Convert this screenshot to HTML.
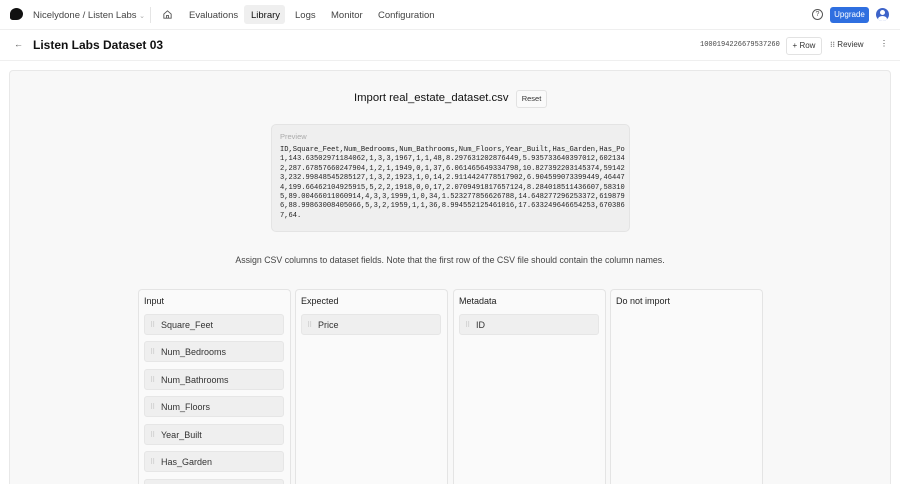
<!DOCTYPE html><html style="overflow:hidden;height:484px"><head><style>
body{margin:0;width:900px;height:484px;overflow:hidden;background:#fff;font-family:"Liberation Sans",sans-serif;color:#222;position:relative}
.a{position:absolute}
.nav{font-size:9.5px;color:#444}
.col{position:absolute;top:289px;width:151px;height:200px;border:1px solid #e4e4e4;border-bottom:none;border-radius:4px 4px 0 0;background:#fafafa}
.col h4{margin:0;font-weight:normal;font-size:9px;color:#222;position:absolute;left:5px;top:6px}
.it{position:absolute;left:5px;width:140px;height:21px;background:#efefef;border:1px solid #e6e6e6;border-radius:3px;font-size:9px;line-height:21px;box-sizing:border-box;padding-left:16px;color:#333}
.it:before{content:"⠿";position:absolute;left:5px;color:#bbb;font-size:7px}
pre{margin:0;font-family:"Liberation Mono",monospace;font-size:7.1px;line-height:9.4px;color:#222}
</style></head><body>
<div class="a" style="left:10px;top:8px;width:13px;height:12px;background:#111;border-radius:50% 50% 50% 20%"></div>
<div class="a nav" style="left:33px;top:10px">Nicelydone / Listen Labs <span style="color:#aaa;font-size:7px">⌄</span></div>
<div class="a" style="left:150px;top:7px;width:1px;height:16px;background:#e5e5e5"></div>
<svg class="a" style="left:162px;top:9px" width="11" height="11" viewBox="0 0 12 12"><path d="M2 5.5L6 2l4 3.5V10H2z M5 10V7h2v3" fill="none" stroke="#555" stroke-width="1"/></svg>
<div class="a nav" style="left:189px;top:10px">Evaluations</div>
<div class="a" style="left:244px;top:5px;width:41px;height:19px;background:#efefef;border-radius:3px"></div>
<div class="a nav" style="left:251px;top:10px;color:#111">Library</div>
<div class="a nav" style="left:295px;top:10px">Logs</div>
<div class="a nav" style="left:331px;top:10px">Monitor</div>
<div class="a nav" style="left:378px;top:10px">Configuration</div>
<div class="a" style="left:812px;top:9px;width:9px;height:9px;border:1px solid #555;border-radius:50%;font-size:7px;text-align:center;line-height:9px;color:#555">?</div>
<div class="a" style="left:830px;top:7px;width:39px;height:16px;background:#2f6fe0;border-radius:3px;color:#fff;font-size:8px;text-align:center;line-height:16px">Upgrade</div>
<div class="a" style="left:876px;top:8px;width:13px;height:13px;background:#3d63c9;border-radius:50%;overflow:hidden"><div style="position:absolute;left:4px;top:2px;width:5px;height:5px;background:#fff;border-radius:50%"></div><div style="position:absolute;left:2px;top:8px;width:9px;height:6px;background:#fff;border-radius:50%"></div></div>
<div class="a" style="left:0;top:29px;width:900px;height:1px;background:#efefef"></div>
<div class="a" style="left:14px;top:39px;font-size:9px;color:#555">←</div>
<div class="a" style="left:33px;top:38px;font-size:12px;font-weight:bold;color:#111">Listen Labs Dataset 03</div>
<div class="a" style="left:700px;top:41px;font-family:'Liberation Mono',monospace;font-size:7px;color:#444">1000194226679537260</div>
<div class="a" style="left:786px;top:37px;width:34px;height:16px;border:1px solid #e2e2e2;border-radius:3px;font-size:8px;line-height:16px;text-align:center;color:#333">+ Row</div>
<div class="a" style="left:830px;top:40px;font-size:8px;color:#333">⁝⁝ Review</div>
<div class="a" style="left:880px;top:39px;font-size:8px;color:#333">⋮</div>
<div class="a" style="left:0;top:60px;width:900px;height:1px;background:#efefef"></div>
<div class="a" style="left:9px;top:70px;width:880px;height:420px;background:#f8f8f8;border:1px solid #e8e8e8;border-radius:4px"></div>
<div class="a" style="left:354px;top:92px;font-size:11.3px;color:#111">Import real_estate_dataset.csv</div>
<div class="a" style="left:516px;top:90px;width:29px;height:16px;border:1px solid #e2e2e2;background:#fafafa;border-radius:3px;font-size:7.5px;line-height:16px;text-align:center;color:#333">Reset</div>
<div class="a" style="left:271px;top:124px;width:357px;height:106px;background:#efefef;border:1px solid #e4e4e4;border-radius:5px;overflow:hidden">
<div style="position:absolute;left:8px;top:7px;font-size:7.5px;color:#aaa">Preview</div>
<pre style="position:absolute;left:8px;top:21px">ID,Square_Feet,Num_Bedrooms,Num_Bathrooms,Num_Floors,Year_Built,Has_Garden,Has_Po
1,143.63502971184062,1,3,3,1967,1,1,48,8.297631202876449,5.935733640397012,602134
2,287.67857660247904,1,2,1,1949,0,1,37,6.061465649334798,10.827392203145374,59142
3,232.99848545285127,1,3,2,1923,1,0,14,2.9114424778517902,6.904599073399449,46447
4,199.66462104925915,5,2,2,1918,0,0,17,2.0709491817657124,8.284018511436607,58310
5,89.00466011060914,4,3,3,1999,1,0,34,1.523277856626788,14.648277296253372,619879
6,88.99863008405066,5,3,2,1959,1,1,36,8.994552125461016,17.633249646654253,670386
7,64.</pre></div>
<div class="a" style="left:0;width:900px;text-align:center;top:255px;font-size:8.8px;color:#444">Assign CSV columns to dataset fields. Note that the first row of the CSV file should contain the column names.</div>
<div class="col" style="left:138px"><h4>Input</h4>
<div class="it" style="top:24px">Square_Feet</div><div class="it" style="top:51px">Num_Bedrooms</div><div class="it" style="top:79px">Num_Bathrooms</div><div class="it" style="top:106px">Num_Floors</div><div class="it" style="top:134px">Year_Built</div><div class="it" style="top:161px">Has_Garden</div><div class="it" style="top:189px"></div></div>
<div class="col" style="left:295px"><h4>Expected</h4><div class="it" style="top:24px">Price</div></div>
<div class="col" style="left:453px"><h4>Metadata</h4><div class="it" style="top:24px">ID</div></div>
<div class="col" style="left:610px"><h4>Do not import</h4></div>
</body></html>
